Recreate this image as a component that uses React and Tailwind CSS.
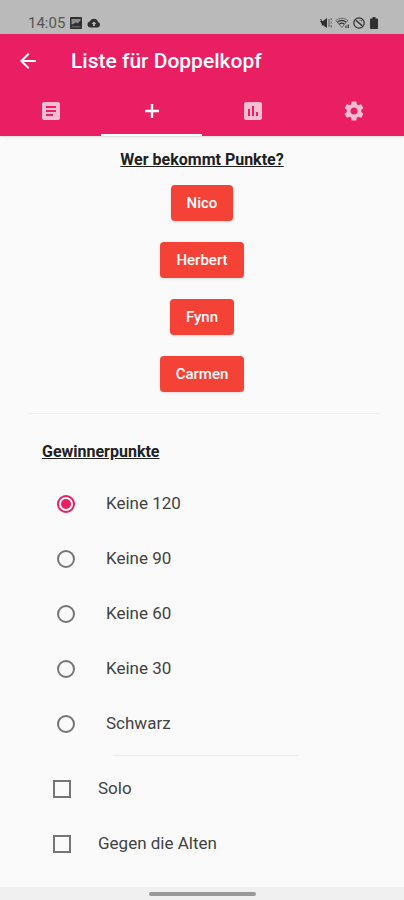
import React, { useState } from 'react';
import {
    MdArrowBack,
    MdArticle,
    MdInsertChart,
    MdSettings,
} from 'react-icons/md';

const players = ['Nico', 'Herbert', 'Fynn', 'Carmen'];
const pointOptions = ['Keine 120', 'Keine 90', 'Keine 60', 'Keine 30', 'Schwarz'];
const extraOptions = ['Solo', 'Gegen die Alten'];

const PlusIcon = ({ className }) => (
    <svg viewBox="0 0 24 24" className={className} fill="none" stroke="currentColor" strokeWidth="2.4">
        <path d="M12 5v14M5 12h14" />
    </svg>
);

const tabs = [
    { id: 'list', label: 'Liste', icon: MdArticle },
    { id: 'add', label: 'Eintragen', icon: PlusIcon },
    { id: 'stats', label: 'Statistik', icon: MdInsertChart },
    { id: 'settings', label: 'Einstellungen', icon: MdSettings },
];

const PictureIcon = () => (
    <svg viewBox="0 0 12 12" className="h-3 w-3">
        <rect width="12" height="12" rx="1" fill="currentColor" />
        <path d="M1.500 2h9v1.500l-3 3-1.500-1.300-2 1.600-2.500.7z" fill="#8f8f8f" />
        <path d="M1.500 9.800h9" stroke="#777777" strokeWidth="1" />
    </svg>
);

const CloudIcon = () => (
    <svg viewBox="0 0 14 10" className="h-[10px] w-[14px]" fill="currentColor">
        <path fillRule="evenodd" d="M3.2 9.5a3 3 0 0 1-.5-5.9A4.4 4.4 0 0 1 11 3.9a2.9 2.9 0 0 1-.2 5.6zM7 3.4 4.6 5.9h1.5v2h1.8v-2h1.5z" />
    </svg>
);

const MuteIcon = () => (
    <svg viewBox="0 0 12 12" className="h-3 w-3" fill="currentColor">
        <path d="M0 4h3L7 1v10L4 8.5H1.8V7z" />
        <path d="M.5 2l5 8" stroke="currentColor" strokeWidth="1" />
        <path d="M9 2v8M11.2 1v2M11.2 4.5v2M11.2 8v2.5" stroke="currentColor" strokeWidth="1" opacity=".7" />
    </svg>
);

const WifiIcon = () => (
    <svg viewBox="0 0 15 12" className="h-3 w-[15px]" fill="none" stroke="currentColor">
        <path d="M.8 3.5C4 .6 9.500.6 12.800 3.5L6.800 10.5z" strokeWidth=".8" opacity=".7" />
        <path d="M2.5 5c2.500-2 6-2 8.500 0M4.300 7.200c1.500-1.200 3.500-1.200 5 0" strokeWidth="1.2" />
        <path d="M11 11V8.500M13.300 7.500V11" strokeWidth="1.2" />
    </svg>
);

const BlockedIcon = () => (
    <svg viewBox="0 0 12 12" className="h-3 w-3" fill="none" stroke="currentColor">
        <circle cx="6" cy="6" r="5.2" strokeWidth="1.2" />
        <path d="m2.800 3.200 6.400 5.600" strokeWidth="1.5" />
        <path d="M6 3h2.500v2" strokeWidth=".8" opacity=".6" />
    </svg>
);

const BatteryIcon = () => (
    <svg viewBox="0 0 8 12" className="ml-[2px] h-3 w-2" fill="currentColor">
        <path d="M2.500 0h3v1.500H7a1 1 0 0 1 1 1V11a1 1 0 0 1-1 1H1a1 1 0 0 1-1-1V2.500a1 1 0 0 1 1-1h1.500z" />
    </svg>
);

const StatusBar = () => (
    <div className="flex h-[34px] items-end justify-between bg-[#bababa] pr-[26px] pb-[3px] pl-7 text-[#303030]">
        <div className="flex items-center gap-[5px]">
            <span className="text-[15px] leading-4 text-[#555555]">14:05</span>
            <PictureIcon />
            <CloudIcon />
        </div>
        <div className="flex h-4 items-center gap-[3px]">
            <MuteIcon />
            <WifiIcon />
            <BlockedIcon />
            <BatteryIcon />
        </div>
    </div>
);

const App = () => {
    const [activeTab, setActiveTab] = useState('add');
    const [points, setPoints] = useState('Keine 120');
    const [extras, setExtras] = useState([]);

    const toggleExtra = (name) => {
        setExtras(extras.includes(name) ? extras.filter(e => e !== name) : [...extras, name]);
    };

    return (
        <div className="flex min-h-screen flex-col bg-[#fafafa] font-['Roboto',sans-serif]">
            <StatusBar />

            <header className="bg-[#e91e63] text-white shadow-sm">
                <div className="flex h-[54px] items-center gap-[31px] pl-4">
                    <button aria-label="Zurück">
                        <MdArrowBack className="h-6 w-6" />
                    </button>
                    <h1 className="text-[21px] leading-6 font-medium">Liste für Doppelkopf</h1>
                </div>
                <nav className="grid grid-cols-4">
                    {tabs.map(({ id, label, icon: Icon }) => (
                        <button
                            key={id}
                            aria-label={label}
                            onClick={() => setActiveTab(id)}
                            className={`flex h-12 items-center justify-center border-b-2 ${activeTab === id ? 'border-white' : 'border-transparent text-white/70'}`}
                        >
                            <Icon className="h-6 w-6" />
                        </button>
                    ))}
                </nav>
            </header>

            <main className="flex-1 pt-[14px] pb-4 text-[#212121]">
                <section className="flex flex-col items-center">
                    <h2 className="text-base leading-5 font-bold underline">Wer bekommt Punkte?</h2>
                    <div className="mt-[15px] flex flex-col items-center gap-[21px]">
                        {players.map(name => (
                            <button key={name} className="h-9 rounded bg-[#f44336] px-4 text-[15px] font-medium text-white shadow">
                                {name}
                            </button>
                        ))}
                    </div>
                </section>

                <hr className="mt-[21px] mr-6 ml-7 border-[#eeeeee]" />

                <section>
                    <h2 className="mt-7 ml-[42px] text-base leading-5 font-bold underline">Gewinnerpunkte</h2>
                    <div className="mt-[14px]">
                        {pointOptions.map(option => (
                            <label key={option} className="flex h-[55px] items-center pl-[57px] text-[17px] text-[#424242]">
                                <input
                                    type="radio"
                                    name="points"
                                    checked={points === option}
                                    onChange={() => setPoints(option)}
                                    className="mr-[31px] grid h-[18px] w-[18px] appearance-none place-items-center rounded-full border-2 border-[#757575] before:h-[10px] before:w-[10px] before:rounded-full checked:border-[#e91e63] checked:before:bg-[#e91e63]"
                                />
                                {option}
                            </label>
                        ))}
                    </div>

                    <hr className="mt-1 mr-[106px] ml-[113px] border-[#eaeaea]" />

                    <div className="mt-[5px]">
                        {extraOptions.map(option => (
                            <label key={option} className="flex h-[55px] items-center pl-[53px] text-[17px] text-[#424242]">
                                <input
                                    type="checkbox"
                                    checked={extras.includes(option)}
                                    onChange={() => toggleExtra(option)}
                                    className="mr-[27px] h-[18px] w-[18px] appearance-none border-2 border-[#757575] checked:border-[#e91e63] checked:bg-[#e91e63]"
                                />
                                {option}
                            </label>
                        ))}
                    </div>
                </section>
            </main>

            <footer className="flex h-[14px] justify-center bg-[#f0f0f0] pt-[5px]">
                <div className="h-1 w-[107px] rounded-full bg-[#999999]"></div>
            </footer>
        </div>
    );
};

export default App;
